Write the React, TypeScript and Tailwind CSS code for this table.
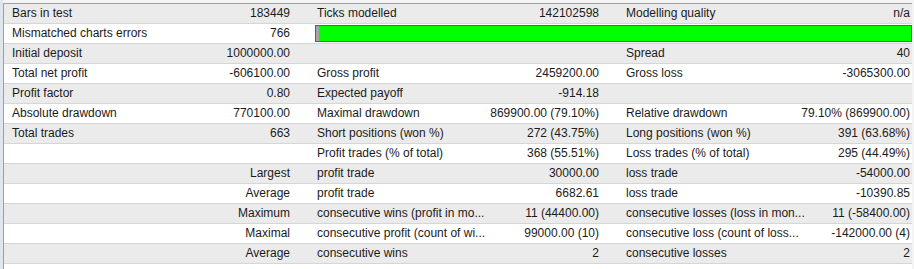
import React from "react";

type Cell = string | null;

// one line of the tester report: label / value pairs in three blocks
const rows: Cell[][] = [
  ["Bars in test", "183449", "Ticks modelled", "142102598", "Modelling quality", "n/a"],
  ["Mismatched charts errors", "766", null, null, null, null],
  ["Initial deposit", "1000000.00", "", "", "Spread", "40"],
  ["Total net profit", "-606100.00", "Gross profit", "2459200.00", "Gross loss", "-3065300.00"],
  ["Profit factor", "0.80", "Expected payoff", "-914.18", "", ""],
  ["Absolute drawdown", "770100.00", "Maximal drawdown", "869900.00 (79.10%)", "Relative drawdown", "79.10% (869900.00)"],
  ["Total trades", "663", "Short positions (won %)", "272 (43.75%)", "Long positions (won %)", "391 (63.68%)"],
  ["", "", "Profit trades (% of total)", "368 (55.51%)", "Loss trades (% of total)", "295 (44.49%)"],
  ["", "Largest", "profit trade", "30000.00", "loss trade", "-54000.00"],
  ["", "Average", "profit trade", "6682.61", "loss trade", "-10390.85"],
  ["", "Maximum", "consecutive wins (profit in mo...", "11 (44400.00)", "consecutive losses (loss in mon...", "11 (-58400.00)"],
  ["", "Maximal", "consecutive profit (count of wi...", "99000.00 (10)", "consecutive loss (count of loss...", "-142000.00 (4)"],
  ["", "Average", "consecutive wins", "2", "consecutive losses", "2"],
];

function Row({ cells, index }: { cells: Cell[]; index: number }) {
  const bg = index % 2 === 0 ? "bg-[#ebebeb]" : "bg-white";
  return (
    <div className={`flex h-[20px] border-b border-[#d6d6d6] ${bg} leading-[19px] whitespace-nowrap`}>
      <div className="w-[150px] shrink-0 pl-[8px]">{cells[0]}</div>
      <div className="w-[154px] shrink-0 pr-[18px] text-right">{cells[1]}</div>
      {cells[2] === null ? (
        <div className="flex-1 pl-[7px] pt-[1px]">
          <div className="flex h-[17px] border border-[#0078d7]">
            <div className="w-[3px] bg-[#a5a5a5]" />
            <div className="flex-1 bg-[#00ff00]" />
          </div>
        </div>
      ) : (
        <>
          <div className="w-[150px] shrink-0 pl-[9px]">{cells[2]}</div>
          <div className="w-[159px] shrink-0 pr-[18px] text-right">{cells[3]}</div>
          <div className="w-[150px] shrink-0 pl-[9px]">{cells[4]}</div>
          <div className="w-[145px] shrink-0 pr-[2px] text-right">{cells[5]}</div>
        </>
      )}
    </div>
  );
}

export default function App() {
  return (
    <div
      className="flex w-[914px] h-[269px] bg-[#f4f4f4] text-[12px] text-[#1b1b1b] overflow-hidden"
      style={{ fontFamily: '"Segoe UI", "Liberation Sans", Arial, sans-serif' }}
    >
      <div className="w-[3px] shrink-0 bg-[#dfe6ee]" />
      <div className="w-[909px] shrink-0 mt-[3px] border-t border-l border-[#a0a0a0] bg-white">
        {rows.map((cells, i) => (
          <Row key={i} cells={cells} index={i} />
        ))}
      </div>
    </div>
  );
}
